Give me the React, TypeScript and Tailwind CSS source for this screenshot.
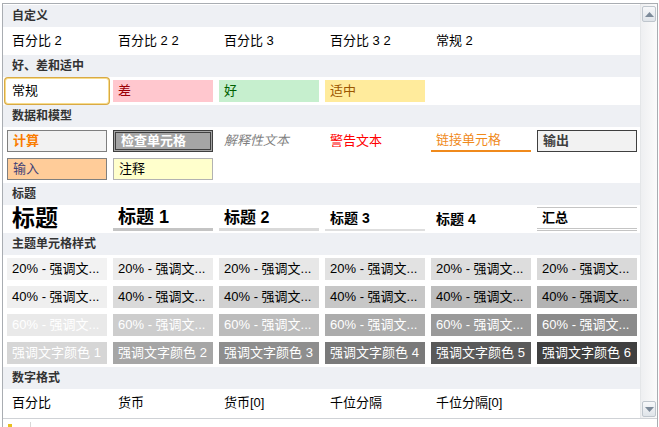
import React from 'react';

const Header: React.FC<{ title: string }> = ({ title }) => (
  <div className="h-[22px] bg-[#eef0f4] flex items-center pl-[9px] text-[12px] font-bold text-[#333333]">
    {title}
  </div>
);

const Row: React.FC<{ children: React.ReactNode; className?: string }> = ({ children, className = '' }) => (
  <div className={`h-[28px] flex items-center gap-[6px] pl-[4px] ${className}`}>{children}</div>
);

const cell = 'w-[100px] h-[22px] shrink-0 flex items-center pl-[5px] text-[13px] whitespace-nowrap overflow-hidden';

const themeRows = [
  {
    label: '20% - 强调文...',
    text: 'text-black',
    bgs: ['bg-[#f2f2f2]', 'bg-[#ececec]', 'bg-[#e7e7e7]', 'bg-[#e2e2e2]', 'bg-[#dddddd]', 'bg-[#d9d9d9]'],
  },
  {
    label: '40% - 强调文...',
    text: 'text-black',
    bgs: ['bg-[#efefef]', 'bg-[#dadada]', 'bg-[#d0d0d0]', 'bg-[#c7c7c7]', 'bg-[#bdbdbd]', 'bg-[#b3b3b3]'],
  },
  {
    label: '60% - 强调文...',
    text: 'text-white',
    bgs: ['bg-[#e9e9e9]', 'bg-[#cdcdcd]', 'bg-[#bcbcbc]', 'bg-[#acacac]', 'bg-[#9a9a9a]', 'bg-[#8b8b8b]'],
  },
];

const accentBgs = ['bg-[#d6d6d6]', 'bg-[#a6a6a6]', 'bg-[#8e8e8e]', 'bg-[#7a7a7a]', 'bg-[#5a5a5a]', 'bg-[#404040]'];

const ScrollButton: React.FC<{ down?: boolean }> = ({ down }) => (
  <div className="mx-[1px] h-[16px] rounded-[2px] border border-[#bfc6cd] bg-gradient-to-b from-[#f7f8fa] to-[#dfe4e9] flex items-center justify-center">
    <svg width="9" height="5" viewBox="0 0 9 5">
      {down ? <polygon points="0,0 9,0 4.5,5" fill="#7d8b9a" /> : <polygon points="0,5 9,5 4.5,0" fill="#7d8b9a" />}
    </svg>
  </div>
);

export default function App() {
  return (
    <div className="w-[659px] h-[427px] bg-white overflow-hidden font-['Liberation_Sans','Noto_Sans_CJK_SC',sans-serif] text-black">
      <div className="ml-[2px] mt-[3px] w-[656px] border-l border-r border-t border-[#a9adb2]">
        <div className="flex h-[415px] border-b border-[#cfd2d6]">
          <div className="w-[637px] pt-[1px]">
            <Header title="自定义" />
            <Row>
              <div className={cell}>百分比 2</div>
              <div className={cell}>百分比 2 2</div>
              <div className={cell}>百分比 3</div>
              <div className={cell}>百分比 3 2</div>
              <div className={cell}>常规 2</div>
            </Row>

            <Header title="好、差和适中" />
            <Row>
              <div className="w-[104px] h-[26px] -mx-[2px] shrink-0 flex items-center pl-[6px] text-[13px] rounded-[3px] border border-[#f7dc8c] shadow-[0_0_0_1px_#d9aa45] bg-white">
                常规
              </div>
              <div className={`${cell} bg-[#ffc7ce] text-[#9c0006]`}>差</div>
              <div className={`${cell} bg-[#c6efce] text-[#006100]`}>好</div>
              <div className={`${cell} bg-[#ffeb9c] text-[#9c5700]`}>适中</div>
            </Row>

            <Header title="数据和模型" />
            <Row>
              <div className={`${cell} pl-[4px] border border-[#7f7f7f] bg-[#f2f2f2] text-[#fa7d00] font-bold`}>计算</div>
              <div className={`${cell} pl-[3px] border-[3px] border-double border-[#3f3f3f] bg-[#a5a5a5] text-white font-bold`}>
                检查单元格
              </div>
              <div className={`${cell} italic text-[#7f7f7f]`}>解释性文本</div>
              <div className={`${cell} text-[#ff0000]`}>警告文本</div>
              <div className="w-[100px] h-[22px] shrink-0 flex flex-col">
                <div className="flex-1 flex items-center pl-[5px] text-[13px] text-[#f08a1c] whitespace-nowrap">链接单元格</div>
                <div className="h-px bg-[#f08a1c]" />
                <div className="h-px" />
                <div className="h-px bg-[#f08a1c]" />
              </div>
              <div className={`${cell} pl-[4px] border border-[#3f3f3f] bg-[#f2f2f2] text-[#3f3f3f] font-bold`}>输出</div>
            </Row>
            <Row>
              <div className={`${cell} pl-[4px] border border-[#7f7f7f] bg-[#ffcc99] text-[#3f3f76]`}>输入</div>
              <div className={`${cell} pl-[4px] border border-[#b2b2b2] bg-[#ffffcc]`}>注释</div>
            </Row>

            <Header title="标题" />
            <Row>
              <div className="w-[100px] h-[24px] shrink-0 flex items-end pl-[5px] text-[23px] leading-[25px] font-bold">标题</div>
              <div className="w-[100px] h-[24px] shrink-0 flex items-center pl-[5px] text-[18px] font-bold border-b-[3px] border-[#c4c4c4]">
                标题 1
              </div>
              <div className="w-[100px] h-[24px] shrink-0 flex items-center pl-[5px] text-[16px] font-bold border-b-[3px] border-[#d9d9d9]">
                标题 2
              </div>
              <div className="w-[100px] h-[24px] shrink-0 flex items-center pl-[5px] text-[14px] font-bold border-b-2 border-[#dedede]">
                标题 3
              </div>
              <div className="w-[100px] h-[24px] shrink-0 flex items-center pl-[5px] text-[14px] font-bold">标题 4</div>
              <div className="w-[100px] h-[24px] shrink-0 flex items-center pl-[5px] text-[13px] font-bold border-t border-b-[3px] border-double border-[#c4c4c4]">
                汇总
              </div>
            </Row>

            <Header title="主题单元格样式" />
            {themeRows.map((r) => (
              <Row key={r.label}>
                {r.bgs.map((bg, i) => (
                  <div key={i} className={`${cell} ${bg} ${r.text}`}>
                    {r.label}
                  </div>
                ))}
              </Row>
            ))}
            <Row>
              {accentBgs.map((bg, i) => (
                <div key={i} className={`${cell} ${bg} text-white`}>
                  强调文字颜色 {i + 1}
                </div>
              ))}
            </Row>

            <Header title="数字格式" />
            <Row>
              <div className={cell}>百分比</div>
              <div className={cell}>货币</div>
              <div className={cell}>货币[0]</div>
              <div className={cell}>千位分隔</div>
              <div className={cell}>千位分隔[0]</div>
            </Row>
          </div>

          <div className="w-[17px] flex flex-col justify-between pt-[2px] pb-[1px] bg-gradient-to-r from-[#eeeff1] to-[#fbfbfb] border-l border-[#e4e6e8]">
            <ScrollButton />
            <ScrollButton down />
          </div>
        </div>

        <div className="h-[8px] flex items-end">
          <div className="w-[27px] h-[4px] flex items-end pl-[5px]">
            <div className="w-[4px] h-[3px] bg-[#e8c020]" />
          </div>
          <div className="w-px h-[5px] bg-[#d8d8d8]" />
        </div>
      </div>
    </div>
  );
}
